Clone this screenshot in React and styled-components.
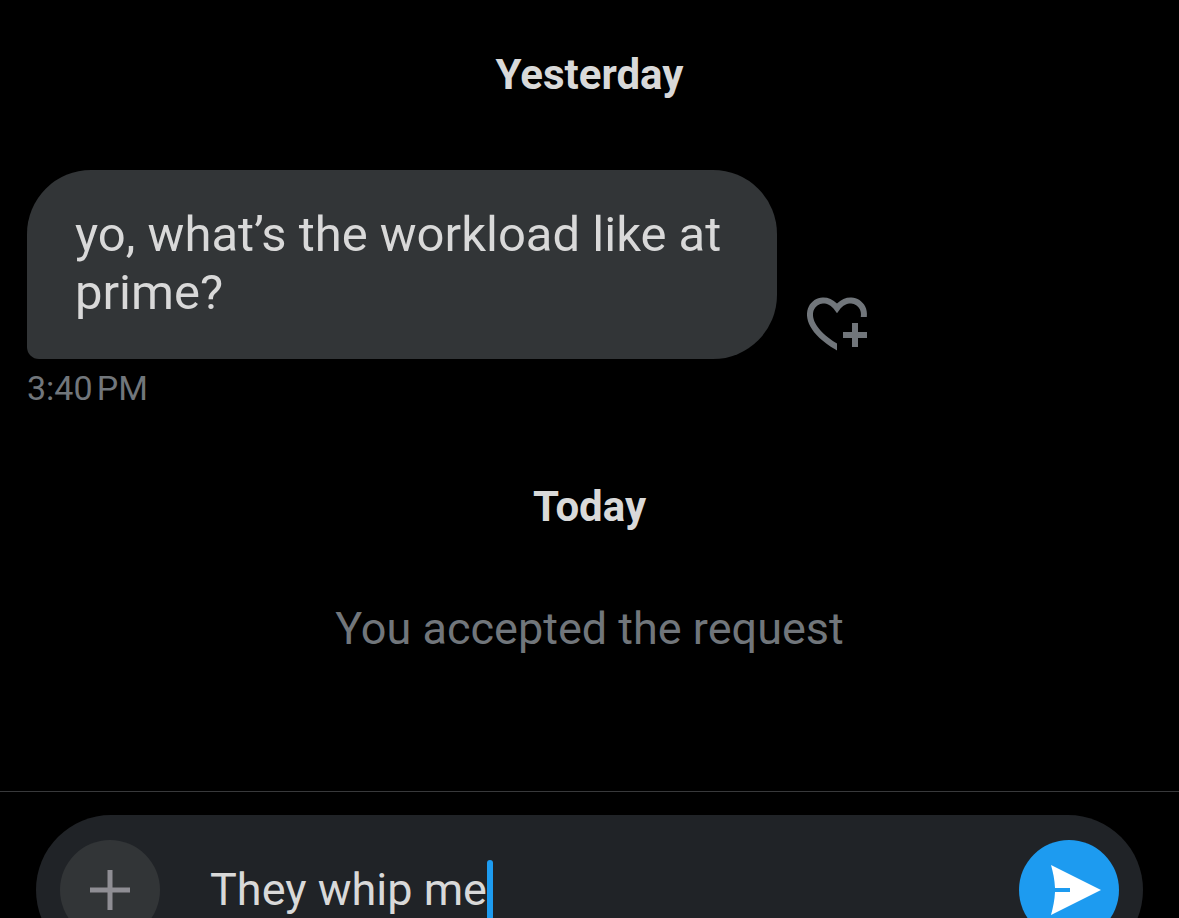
import React, { useState } from 'react';
import styled, { createGlobalStyle } from 'styled-components';

const GlobalStyle = createGlobalStyle`
  * {
    box-sizing: border-box;
  }
  body {
    margin: 0;
    background-color: #000000;
    color: #d9d9d9;
    font-family: Roboto, "Liberation Sans", sans-serif;
  }
`;

const Screen = styled.div`
  height: 100vh;
  overflow: hidden;
`;

const Thread = styled.main`
  display: flex;
  flex-direction: column;
  padding: 51px 27px 134px;
`;

const DayLabel = styled.h2`
  margin: 0;
  font-size: 42px;
  line-height: 48px;
  font-weight: 700;
  text-align: center;
`;

const Message = styled.article`
  margin: 71px 0 75px;
`;

const MessageRow = styled.div`
  display: flex;
  align-items: flex-end;
  gap: 24px;
`;

const Bubble = styled.p`
  max-width: 66.67%;
  margin: 0;
  padding: 36px 48px 37px;
  border-radius: 64px 64px 64px 12px;
  background-color: #323537;
  font-size: 49px;
  line-height: 58px;
`;

const Time = styled.time`
  display: block;
  margin-top: 9px;
  font-size: 34px;
  line-height: 40px;
  color: #71767b;
`;

const Notice = styled.p`
  margin: 70px 0 0;
  font-size: 45px;
  line-height: 56px;
  text-align: center;
  color: #71767b;
`;

const IconButton = styled.button`
  display: flex;
  flex-shrink: 0;
  align-items: center;
  justify-content: center;
  padding: 0;
  border: none;
  background: none;
  color: #71767b;
`;

const RoundButton = styled(IconButton)`
  width: 100px;
  height: 100px;
  border-radius: 50%;
  background-color: ${(props) => (props.$primary ? '#1d9bf0' : '#323537')};
  color: ${(props) => (props.$primary ? '#ffffff' : '#8f8e94')};
`;

const Footer = styled.footer`
  padding: 23px 36px;
  border-top: 1px solid #38393b;
`;

const Composer = styled.form`
  display: flex;
  align-items: center;
  padding: 25px 24px;
  border-radius: 75px;
  background-color: #202327;
`;

const Field = styled.div`
  display: flex;
  flex: 1;
  align-items: center;
  min-width: 0;
  padding: 0 50px;
`;

const TextInput = styled.input`
  field-sizing: content;
  min-width: 0;
  padding: 0;
  border: none;
  outline: none;
  background: none;
  color: inherit;
  caret-color: transparent;
  font-family: inherit;
  font-size: 45px;
  line-height: 56px;
`;

const Caret = styled.span`
  flex-shrink: 0;
  width: 6px;
  height: 60px;
  border-radius: 3px;
  background-color: #1d9bf0;
`;

function HeartPlusIcon() {
  return (
    <svg width="72" height="72" viewBox="0 0 24 24" fill="currentColor" aria-hidden="true">
      <path d="M17 12v3h-2.998v2h3v3h2v-3h3v-2h-3.001v-3H17zm-5 6.839c-3.871-2.34-6.053-4.639-7.127-6.609-1.112-2.04-1.031-3.7-.479-4.82.561-1.13 1.667-1.84 2.91-1.91 1.222-.06 2.68.51 3.892 2.16l.806 1.09.805-1.09c1.211-1.65 2.668-2.22 3.89-2.16 1.242.07 2.347.78 2.908 1.91.334.677.49 1.554.321 2.59h2.011c.153-1.283-.039-2.469-.539-3.48-.887-1.79-2.647-2.91-4.601-3.01-1.65-.09-3.367.56-4.796 2.01-1.43-1.45-3.147-2.1-4.798-2.01-1.954.1-3.714 1.22-4.601 3.01-.896 1.81-.846 4.17.514 6.67 1.353 2.48 4.003 5.12 8.382 7.67l.502.299v-2.32z" />
    </svg>
  );
}

function PlusIcon() {
  return (
    <svg width="40" height="40" viewBox="0 0 40 40" fill="currentColor" aria-hidden="true">
      <path d="M17.500 0h5v17.500H40v5H22.500V40h-5V22.500H0v-5h17.500z" />
    </svg>
  );
}

// extra room on the left of the viewBox keeps the plane right of centre
function SendIcon() {
  return (
    <svg width="64" height="50" viewBox="-14 0 64 50" fill="currentColor" aria-hidden="true">
      <path d="M0 0l50 25L0 50c2-7 3.700-15 4-22.900h15v-4.200H4C3.700 15 2 7 0 0z" />
    </svg>
  );
}

function App() {
  const [text, setText] = useState('They whip me');

  return (
    <Screen>
      <GlobalStyle />
      <Thread>
        <DayLabel>Yesterday</DayLabel>
        <Message>
          <MessageRow>
            <Bubble>yo, what’s the workload like at prime?</Bubble>
            <IconButton type="button" aria-label="Add reaction">
              <HeartPlusIcon />
            </IconButton>
          </MessageRow>
          <Time>3:40{'\u202f'}PM</Time>
        </Message>
        <DayLabel>Today</DayLabel>
        <Notice>You accepted the request</Notice>
      </Thread>
      <Footer>
        <Composer onSubmit={(e) => e.preventDefault()}>
          <RoundButton type="button" aria-label="Add attachment">
            <PlusIcon />
          </RoundButton>
          <Field>
            <TextInput
              aria-label="Message"
              value={text}
              onChange={(e) => setText(e.target.value)}
            />
            <Caret />
          </Field>
          <RoundButton $primary type="submit" aria-label="Send">
            <SendIcon />
          </RoundButton>
        </Composer>
      </Footer>
    </Screen>
  );
}

export default App;
